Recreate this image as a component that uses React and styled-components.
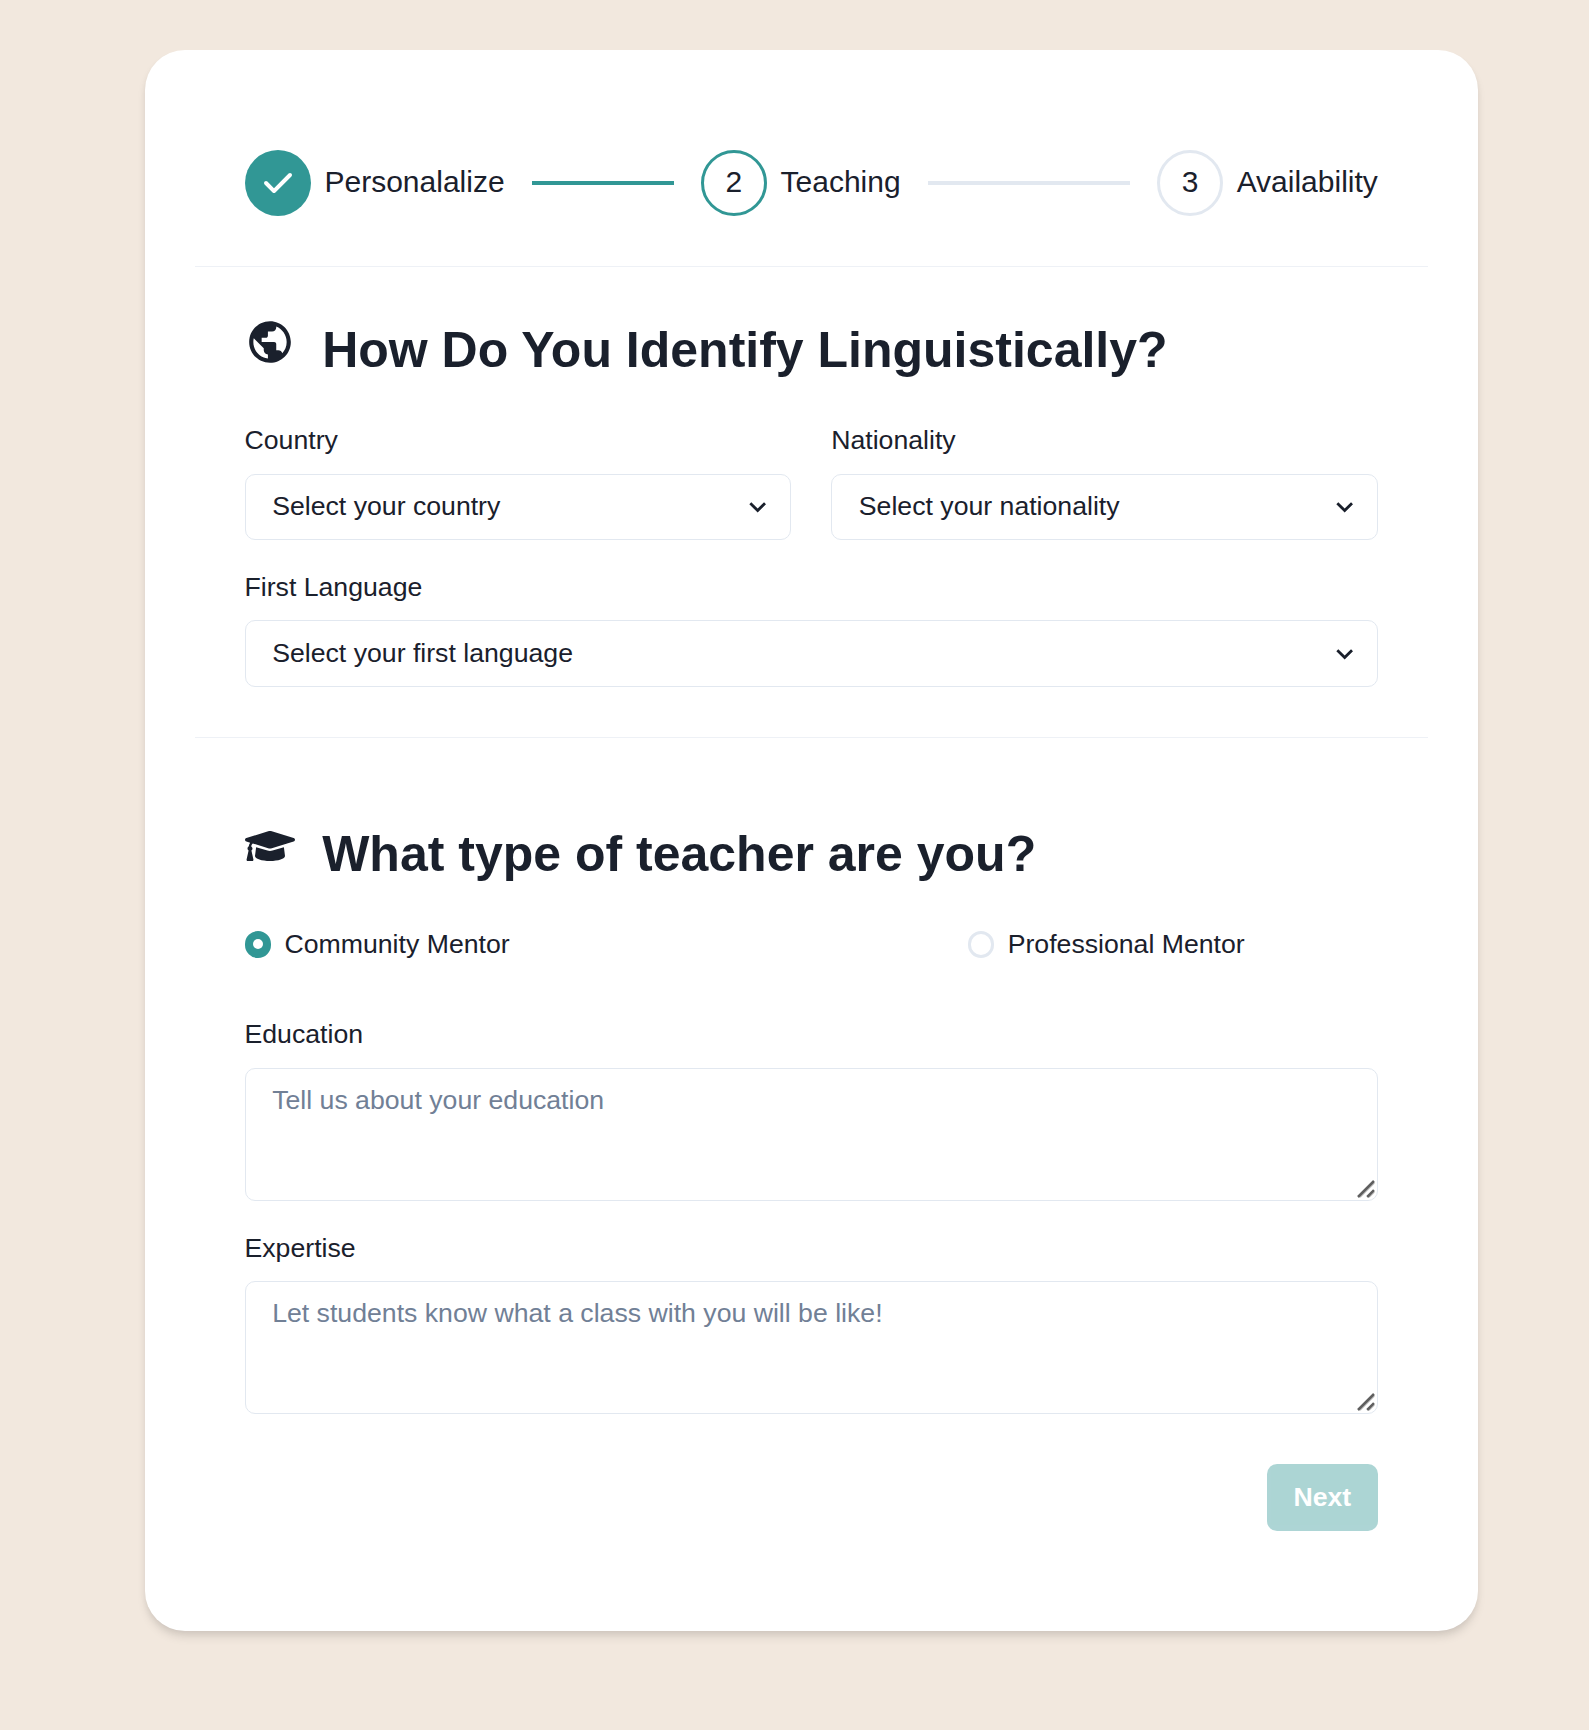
import React from 'react';
import styled, { createGlobalStyle } from 'styled-components';
import { MdPublic } from 'react-icons/md';
import { FaGraduationCap } from 'react-icons/fa';

const teal = '#319795';
const line = '#e2e8f0';

const GlobalStyle = createGlobalStyle`
  html { font-size: 26.6667px; }
  *, *::before, *::after { box-sizing: border-box; }
  body {
    margin: 0;
    background: #f2e8de;
    color: #1a202c;
    font-family: "Liberation Sans", Arial, sans-serif;
    font-size: 1rem;
    line-height: 1.5;
  }
`;

const Page = styled.main`
  display: flex;
  justify-content: center;
  align-items: flex-start;
  min-height: 1730px;
  padding: 49.6px 0 50px 33.33px;
`;

const Card = styled.form`
  width: 1333.33px;
  padding: 100px;
  background: #fff;
  border-radius: 1.5rem;
  box-shadow: 0 6.67px 10px -1.67px rgba(0, 0, 0, 0.1), 0 3.33px 6.67px -1.67px rgba(0, 0, 0, 0.06);
`;

const Stepper = styled.ol`
  display: flex;
  justify-content: space-between;
  gap: 1rem;
  margin: 0;
  padding: 0;
  list-style: none;
`;

const StepItem = styled.li`
  display: flex;
  align-items: center;
  gap: 0.5rem;
  flex: 1 0 0%;
  font-size: 30px;

  &:last-child { flex: none; }
`;

const StepMark = styled.span`
  display: flex;
  align-items: center;
  justify-content: center;
  flex: none;
  width: 2.5rem;
  height: 2.5rem;
  border-radius: 50%;
  color: ${({ $status }) => ($status === 'complete' ? '#fff' : 'inherit')};
  background: ${({ $status }) => ($status === 'complete' ? teal : 'transparent')};
  border: ${({ $status }) =>
    $status === 'complete' ? 'none' : `3px solid ${$status === 'active' ? teal : line}`};
`;

const StepText = styled.span`
  padding-bottom: 2.5px;
`;

const StepLine = styled.span`
  flex: 1;
  height: 4px;
  margin-left: 14.5px;
  background: ${({ $done }) => ($done ? teal : line)};
`;

const CheckSvg = styled.svg`
  width: 40px;
  height: 40px;
  fill: currentColor;
`;

const Divider = styled.hr`
  height: 1px;
  margin: 50px -50px ${({ $roomy }) => ($roomy ? '83px' : '49.67px')};
  border: 0;
  background: ${line};
  opacity: 0.6;
`;

const Heading = styled.h2`
  display: flex;
  align-items: flex-start;
  gap: 27.67px;
  margin: 0 0 36.67px;
  font-size: 50px;
  font-weight: 700;
  line-height: 66.67px;
`;

const FieldGrid = styled.div`
  display: grid;
  grid-template-columns: 1fr 1fr;
  column-gap: 40px;
  row-gap: 1rem;
`;

const Field = styled.div`
  grid-column: ${({ $wide }) => ($wide ? '1 / -1' : 'auto')};
`;

const Label = styled.label`
  display: block;
  margin-bottom: 0.5rem;
`;

const Control = styled.div`
  position: relative;
  display: flex;
`;

const Select = styled.select`
  width: 100%;
  height: 2.5rem;
  padding: 0 2rem 1px 1rem;
  appearance: none;
  background: transparent;
  border: 1px solid ${line};
  border-radius: 10px;
  color: inherit;
  font: inherit;
`;

const Chevron = styled.svg`
  position: absolute;
  top: 50%;
  right: 16.67px;
  width: 33.33px;
  height: 33.33px;
  transform: translateY(-50%);
  fill: currentColor;
  pointer-events: none;
`;

const TextArea = styled.textarea`
  width: 100%;
  height: 5rem;
  padding: 0.5rem 1rem;
  background: transparent;
  border: 1px solid ${line};
  border-radius: 10px;
  color: inherit;
  font: inherit;
  line-height: 1.375;
  resize: none;

  &::placeholder { color: #718096; opacity: 1; }
`;

const Grip = styled.svg`
  position: absolute;
  right: 3px;
  bottom: 3px;
  width: 18px;
  height: 18px;
`;

const Radios = styled.div`
  display: grid;
  grid-template-columns: 723.2px 1fr;
  margin-bottom: 50px;
`;

const RadioLabel = styled.label`
  display: flex;
  align-items: center;
  gap: 0.5rem;
`;

const Radio = styled.input`
  appearance: none;
  display: grid;
  place-items: center;
  width: 1rem;
  height: 1rem;
  margin: 0;
  border: 3px solid ${line};
  border-radius: 50%;

  &:checked { border-color: ${teal}; background: ${teal}; }
  &:checked::before {
    content: '';
    width: 10px;
    height: 10px;
    border-radius: 50%;
    background: #fff;
  }
`;

const Actions = styled.div`
  display: flex;
  justify-content: flex-end;
  margin-top: 50px;
`;

const NextButton = styled.button`
  height: 2.5rem;
  padding: 0 1rem;
  border: 0;
  border-radius: 10px;
  background: ${teal};
  color: #fff;
  font: inherit;
  font-weight: 600;
  line-height: 1.2;
  opacity: 0.4;
`;

const steps = [
  { title: 'Personalalize', status: 'complete' },
  { title: 'Teaching', status: 'active' },
  { title: 'Availability', status: 'incomplete' },
];

function SelectField({ id, label, placeholder, wide }) {
  return (
    <Field $wide={wide}>
      <Label htmlFor={id}>{label}</Label>
      <Control>
        <Select id={id} defaultValue="">
          <option value="">{placeholder}</option>
        </Select>
        <Chevron viewBox="0 0 24 24" aria-hidden="true">
          <path d="M16.59 8.59L12 13.17 7.41 8.59 6 10l6 6 6-6z" />
        </Chevron>
      </Control>
    </Field>
  );
}

function TextField({ id, label, placeholder }) {
  return (
    <Field $wide>
      <Label htmlFor={id}>{label}</Label>
      <Control>
        <TextArea id={id} placeholder={placeholder} />
        <Grip viewBox="0 0 18 18" aria-hidden="true">
          <path d="M3 17.3L17.3 3M12 17.3L17.3 12" stroke="#c4c4c4" strokeWidth="1.6" />
          <path d="M1 17L17 1M10.2 17L17 10.2" stroke="#5f5f5f" strokeWidth="2.5" />
        </Grip>
      </Control>
    </Field>
  );
}

export default function App() {
  return (
    <>
      <GlobalStyle />
      <Page>
        <Card>
          <Stepper>
            {steps.map(({ title, status }, i) => (
              <StepItem key={title}>
                <StepMark $status={status}>
                  {status === 'complete' ? (
                    <CheckSvg viewBox="0 0 20 20" aria-hidden="true">
                      <path
                        fillRule="evenodd"
                        clipRule="evenodd"
                        d="M16.707 5.293a1 1 0 010 1.414l-8 8a1 1 0 01-1.414 0l-4-4a1 1 0 011.414-1.414L8 12.586l7.293-7.293a1 1 0 011.414 0z"
                      />
                    </CheckSvg>
                  ) : (
                    <StepText>{i + 1}</StepText>
                  )}
                </StepMark>
                <StepText>{title}</StepText>
                {i < steps.length - 1 && <StepLine $done={status === 'complete'} />}
              </StepItem>
            ))}
          </Stepper>

          <Divider />

          <Heading>
            <MdPublic />
            How Do You Identify Linguistically?
          </Heading>
          <FieldGrid>
            <SelectField id="country" label="Country" placeholder="Select your country" />
            <SelectField id="nationality" label="Nationality" placeholder="Select your nationality" />
            <SelectField id="language" label="First Language" placeholder="Select your first language" wide />
          </FieldGrid>

          <Divider $roomy />

          <Heading>
            <FaGraduationCap />
            What type of teacher are you?
          </Heading>
          <Radios>
            <RadioLabel>
              <Radio type="radio" name="mentor" defaultChecked />
              Community Mentor
            </RadioLabel>
            <RadioLabel>
              <Radio type="radio" name="mentor" />
              Professional Mentor
            </RadioLabel>
          </Radios>
          <FieldGrid>
            <TextField id="education" label="Education" placeholder="Tell us about your education" />
            <TextField
              id="expertise"
              label="Expertise"
              placeholder="Let students know what a class with you will be like!"
            />
          </FieldGrid>

          <Actions>
            <NextButton type="button" disabled>Next</NextButton>
          </Actions>
        </Card>
      </Page>
    </>
  );
}
